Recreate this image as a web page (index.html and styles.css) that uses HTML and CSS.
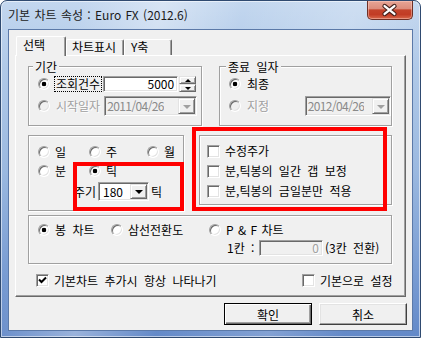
FILE: index.html
```html
<!DOCTYPE html>
<html lang="ko">
<head>
  <meta charset="UTF-8" />
  <title>기본 차트 속성</title>
  <link rel="stylesheet" href="styles.css">
</head>
<body>

  <div class="window">

    <!-- BARRE DE TITRE -->
    <div class="titlebar">
      <span class="title">기본 차트 속성 : Euro FX (2012.6)</span>
      <span class="close-btn">
        <svg width="46" height="19" viewBox="0 0 46 19">
          <path d="M18 5 L28 13 M28 5 L18 13" stroke="#43201a" stroke-width="4.6" stroke-linecap="round" fill="none"/>
          <path d="M18 5 L28 13 M28 5 L18 13" stroke="#fff" stroke-width="2.4" stroke-linecap="round" fill="none"/>
        </svg>
      </span>
    </div>

    <div class="client">

      <!-- ONGLETS -->
      <div class="tabs">
        <div class="tab tab-active">선택</div>
        <div class="tab tab-chart">차트표시</div>
        <div class="tab tab-axis">Y축</div>
      </div>

      <div class="panel">

        <!-- LIGNE 1 : PERIODE / DATE DE FIN -->
        <div class="row-top">
          <div class="group group-period">
            <span class="legend">기간</span>
            <div class="line line-a">
              <span class="radio checked"></span>
              <span class="label focus">조회건수</span>
              <span class="edit edit-count">5000</span>
              <span class="spin">
                <span class="raised spin-btn"><i class="arrow-up"></i></span>
                <span class="raised spin-btn"><i class="arrow-small"></i></span>
              </span>
            </div>
            <div class="line line-b">
              <span class="radio disabled"></span>
              <span class="label off">시작일자</span>
              <span class="combo combo-date combo-off">
                <span class="combo-text">2011/04/26</span>
                <span class="raised drop"><i class="arrow-down off"></i></span>
              </span>
            </div>
          </div>

          <div class="group group-end">
            <span class="legend">종료 일자</span>
            <div class="line line-a">
              <span class="radio checked"></span>
              <span class="label">최종</span>
            </div>
            <div class="line line-b">
              <span class="radio disabled"></span>
              <span class="label label-wide off">지정</span>
              <span class="combo combo-date combo-off">
                <span class="combo-text">2012/04/26</span>
                <span class="raised drop"><i class="arrow-down off"></i></span>
              </span>
            </div>
          </div>
        </div>

        <!-- LIGNE 2 : INTERVALLE / OPTIONS -->
        <div class="row-mid">
          <div class="group group-interval">
            <div class="radio-grid">
              <span class="opt"><span class="radio"></span>일</span>
              <span class="opt"><span class="radio"></span>주</span>
              <span class="opt"><span class="radio"></span>월</span>
              <span class="opt"><span class="radio"></span>분</span>
              <span class="opt"><span class="radio checked"></span>틱</span>
            </div>
            <div class="line line-cycle">
              <span class="label">주기</span>
              <span class="combo combo-cycle">
                <span class="combo-text">180</span>
                <span class="raised drop"><i class="arrow-down"></i></span>
              </span>
              <span class="label unit">틱</span>
            </div>
          </div>

          <div class="group group-options">
            <div class="check-line"><span class="check"></span>수정주가</div>
            <div class="check-line"><span class="check"></span>분,틱봉의 일간 갭 보정</div>
            <div class="check-line"><span class="check"></span>분,틱봉의 금일분만 적용</div>
          </div>
        </div>

        <!-- LIGNE 3 : TYPE DE GRAPHIQUE -->
        <div class="group group-chart">
          <div class="chart-grid">
            <span class="opt"><span class="radio checked"></span>봉 차트</span>
            <span class="opt"><span class="radio"></span>삼선전환도</span>
            <span class="opt opt-pf"><span class="radio"></span>P &amp; F 차트</span>
          </div>
          <div class="line line-box">
            <span class="label box-label">1칸 :</span>
            <span class="edit edit-box off">0</span>
            <span class="label box-note">(3칸 전환)</span>
          </div>
        </div>

        <div class="footer-checks">
          <div class="check-line"><span class="check"><svg width="9" height="9" viewBox="0 0 9 9"><path d="M1 3.5 L3.5 6 L8 1.5" stroke="#000" stroke-width="2" fill="none"/></svg></span>기본차트 추가시 항상 나타나기</div>
          <div class="check-line"><span class="check"></span>기본으로 설정</div>
        </div>

      </div>

      <!-- BOUTONS -->
      <div class="buttons">
        <button class="btn btn-default">확인</button>
        <button class="btn">취소</button>
      </div>
    </div>

    <!-- CADRES ROUGES (annotations) -->
    <div class="mark mark-cycle"></div>
    <div class="mark mark-options"></div>
  </div>

</body>
</html>
```

FILE: styles.css
```css
/* RESET DE BASE */
* {
  margin: 0;
  padding: 0;
  box-sizing: border-box;
}

body {
  width: 421px;
  height: 338px;
  overflow: hidden;
  font-family: "Noto Sans CJK KR", sans-serif;
  font-size: 12px;
  line-height: 14px;
  word-spacing: 3px;
  color: #000;
  background: #fff;
}

/* FENETRE */
.window {
  position: relative;
  width: 421px;
  height: 338px;
  border: 1px solid #2f4a70;
  border-radius: 7px 7px 0 0;
  padding: 0 7px 6px 7px;
  display: flex;
  flex-direction: column;
  background:
    linear-gradient(105deg, rgba(255,255,255,0) 15%, rgba(255,255,255,0.35) 32%, rgba(255,255,255,0) 48%, rgba(255,255,255,0.2) 70%, rgba(255,255,255,0) 85%),
    linear-gradient(180deg, #c3d7ef 0%, #b0c9e8 20%, #9bb9e0 50%, #7a9dd3 80%, #6389c8 100%);
  box-shadow: inset 0 0 0 1px rgba(255, 255, 255, 0.55);
}

.titlebar {
  height: 28px;
  flex-shrink: 0;
  display: flex;
  justify-content: space-between;
  align-items: flex-start;
}

.title {
  padding-top: 7px;
  color: #1b1b1b;
  word-spacing: 1px;
}

.close-btn {
  width: 46px;
  height: 19px;
  border: 1px solid #6e3026;
  border-top: none;
  border-radius: 0 0 5px 5px;
  background: linear-gradient(180deg, #e7a596 0%, #dc8d7c 42%, #c4432b 50%, #c23c25 75%, #d8684b 100%);
  box-shadow: inset 0 0 0 1px rgba(255, 210, 200, 0.45);
  display: flex;
}

.close-btn svg {
  margin-left: -1px;
}

/* ZONE CLIENT */
.client {
  height: 302px;
  border: 1px solid #5b79a8;
  background: #f0f0f0;
  padding: 6px 5px 0 6px;
}

/* ONGLETS */
.tabs {
  height: 19px;
  display: flex;
  align-items: flex-end;
}

.tab {
  height: 16px;
  border: 1px solid;
  border-color: #fff #696969 transparent #fff;
  border-bottom: none;
  border-radius: 2px 2px 0 0;
  box-shadow: inset -1px 0 0 #a0a0a0;
  background: #f0f0f0;
  padding-left: 6px;
}

.tab-active {
  height: 20px;
  width: 50px;
  margin-left: 1px;
  margin-bottom: -1px;
  padding-top: 1px;
  position: relative;
  z-index: 1;
}

.tab-chart {
  width: 58px;
  padding-left: 5px;
}

.tab-axis {
  width: 48px;
}

/* PANNEAU */
.panel {
  width: 391px;
  height: 242px;
  border: 1px solid;
  border-color: #fff #696969 #696969 #fff;
  box-shadow: inset -1px -1px 0 #a0a0a0;
  padding: 10px 13px 0 12px;
}

.row-top {
  display: flex;
  gap: 17px;
}

.row-mid {
  display: flex;
  align-items: flex-start;
  gap: 15px;
  margin-top: 9px;
}

/* GROUPES */
.group {
  border: 1px solid #a0a0a0;
  box-shadow: inset 1px 1px 0 #fff, 1px 1px 0 #fff;
  padding-left: 9px;
}

.legend {
  display: table;
  margin: -7px 0 0 -5px;
  padding: 0 2px;
  line-height: 13px;
  background: #f0f0f0;
}

.group-period {
  width: 174px;
  height: 60px;
}

.group-end {
  width: 173px;
  height: 60px;
}

.group-end .legend {
  margin-left: -3px;
}

.group-interval {
  width: 156px;
  height: 76px;
  padding-top: 6px;
}

.group-options {
  width: 193px;
  height: 70px;
  padding: 5px 0 0 7px;
}

.group-chart {
  width: 364px;
  height: 49px;
  margin-top: 4px;
  padding-top: 4px;
}

.line {
  display: flex;
  align-items: center;
}

.line-a {
  height: 16px;
  margin-top: 3px;
}

.line-b {
  height: 20px;
  margin-top: 4px;
}

.label {
  margin-left: 4px;
  padding: 0 1px;
  border: 1px solid transparent;
  white-space: nowrap;
}

.label.focus {
  border: 1px dotted #000;
}

.label-wide {
  width: 62px;
}

.off {
  color: #a0a0a0;
  text-shadow: 1px 1px 0 #fff;
}

/* BOUTONS RADIO / CASES */
.radio {
  width: 12px;
  height: 12px;
  flex-shrink: 0;
  border-radius: 50%;
  border: 1px solid;
  border-color: #a0a0a0 #fff #fff #a0a0a0;
  box-shadow: inset 1px 1px 0 #696969, inset -1px -1px 0 #e3e3e3;
  background: #fff;
}

.radio.checked {
  background: radial-gradient(circle, #000 0, #000 2px, #fff 2.6px);
}

.radio.disabled {
  background: #f0f0f0;
}

.opt {
  display: flex;
  align-items: center;
  gap: 5px;
  white-space: nowrap;
}

.opt-pf {
  word-spacing: 1px;
}

.radio-grid {
  display: grid;
  grid-template-columns: 51px 58px auto;
  grid-auto-rows: 19px;
}

.chart-grid {
  display: grid;
  grid-template-columns: 73px 98px auto;
  grid-auto-rows: 20px;
}

.check {
  width: 13px;
  height: 13px;
  flex-shrink: 0;
  border: 1px solid;
  border-color: #a0a0a0 #fff #fff #a0a0a0;
  box-shadow: inset 1px 1px 0 #696969, inset -1px -1px 0 #e3e3e3;
  background: #fff;
  display: flex;
  align-items: center;
  justify-content: center;
}

.check-line {
  height: 20px;
  display: flex;
  align-items: center;
  gap: 5px;
  white-space: nowrap;
}

/* CHAMPS */
.edit {
  border: 1px solid;
  border-color: #a0a0a0 #fff #fff #a0a0a0;
  box-shadow: inset 1px 1px 0 #696969, inset -1px -1px 0 #e3e3e3;
  background: #fff;
  text-align: right;
}

.edit-count {
  width: 75px;
  height: 16px;
  margin-left: 1px;
  padding-right: 3px;
  line-height: 13px;
}

.edit-box {
  width: 64px;
  height: 16px;
  padding-right: 3px;
  line-height: 13px;
  background: #f0f0f0;
}

.raised {
  border: 1px solid;
  border-color: #e3e3e3 #696969 #696969 #e3e3e3;
  box-shadow: inset 1px 1px 0 #fff, inset -1px -1px 0 #a0a0a0;
  background: #f0f0f0;
  display: flex;
  align-items: center;
  justify-content: center;
  flex-shrink: 0;
}

.spin {
  width: 17px;
  height: 16px;
  margin-left: 1px;
  display: flex;
  flex-direction: column;
}

.spin-btn {
  height: 8px;
}

.arrow-up {
  border-left: 3px solid transparent;
  border-right: 3px solid transparent;
  border-bottom: 3px solid #000;
}

.arrow-small {
  border-left: 3px solid transparent;
  border-right: 3px solid transparent;
  border-top: 3px solid #000;
}

.arrow-down {
  border-left: 4px solid transparent;
  border-right: 4px solid transparent;
  border-top: 4px solid #000;
  margin-top: 1px;
}

.arrow-down.off {
  border-top-color: #a0a0a0;
}

.combo {
  display: flex;
  justify-content: space-between;
  border: 1px solid;
  border-color: #a0a0a0 #fff #fff #a0a0a0;
  box-shadow: inset 1px 1px 0 #696969, inset -1px -1px 0 #e3e3e3;
  background: #fff;
  padding: 1px;
}

.combo-date {
  width: 93px;
  height: 20px;
  margin-left: 2px;
}

.combo-off {
  background: #f0f0f0;
  color: #8a8a8a;
}

.combo-text {
  padding-left: 1px;
  line-height: 16px;
  overflow: hidden;
  white-space: nowrap;
}

.combo-date .combo-text {
  letter-spacing: -0.6px;
}

.drop {
  width: 17px;
}

.combo-cycle {
  width: 51px;
  height: 19px;
  margin-left: 0;
}

.combo-cycle .combo-text {
  padding-left: 3px;
  line-height: 15px;
}

.line-cycle {
  height: 19px;
  margin-top: 2px;
  margin-left: 36px;
}

.line-cycle .label:first-child {
  margin-left: 0;
  padding: 0;
  border: none;
  width: 24px;
}

.unit {
  margin-left: 2px;
  padding: 0;
  border: none;
}

.line-box {
  height: 16px;
  margin-left: 189px;
}

.box-label {
  margin-left: 0;
  padding: 0;
  border: none;
  width: 32px;
}

.box-note {
  margin-left: 2px;
  padding: 0;
  border: none;
}

/* CASES DU BAS */
.footer-checks {
  display: grid;
  grid-template-columns: 266px auto;
  margin: 10px 0 0 8px;
}

.footer-checks .check-line {
  height: 13px;
}

/* BOUTONS */
.buttons {
  display: flex;
  justify-content: flex-end;
  gap: 7px;
  margin-top: 6px;
}

.btn {
  width: 88px;
  height: 22px;
  font-family: inherit;
  font-size: 12px;
  color: #000;
  border: 1px solid;
  border-color: #fff #404040 #404040 #fff;
  box-shadow: inset -1px -1px 0 #a0a0a0, inset 1px 1px 0 #e3e3e3;
  background: #f0f0f0;
}

.btn-default {
  border-color: #000;
  box-shadow: inset 1px 1px 0 #fff, inset -1px -1px 0 #696969, inset -2px -2px 0 #a0a0a0;
}

/* ANNOTATIONS ROUGES */
.mark {
  position: absolute;
  border: 4px solid #ff0000;
}

.mark-cycle {
  left: 72px;
  top: 161px;
  width: 111px;
  height: 49px;
}

.mark-options {
  left: 191px;
  top: 126px;
  width: 195px;
  height: 84px;
}
```
